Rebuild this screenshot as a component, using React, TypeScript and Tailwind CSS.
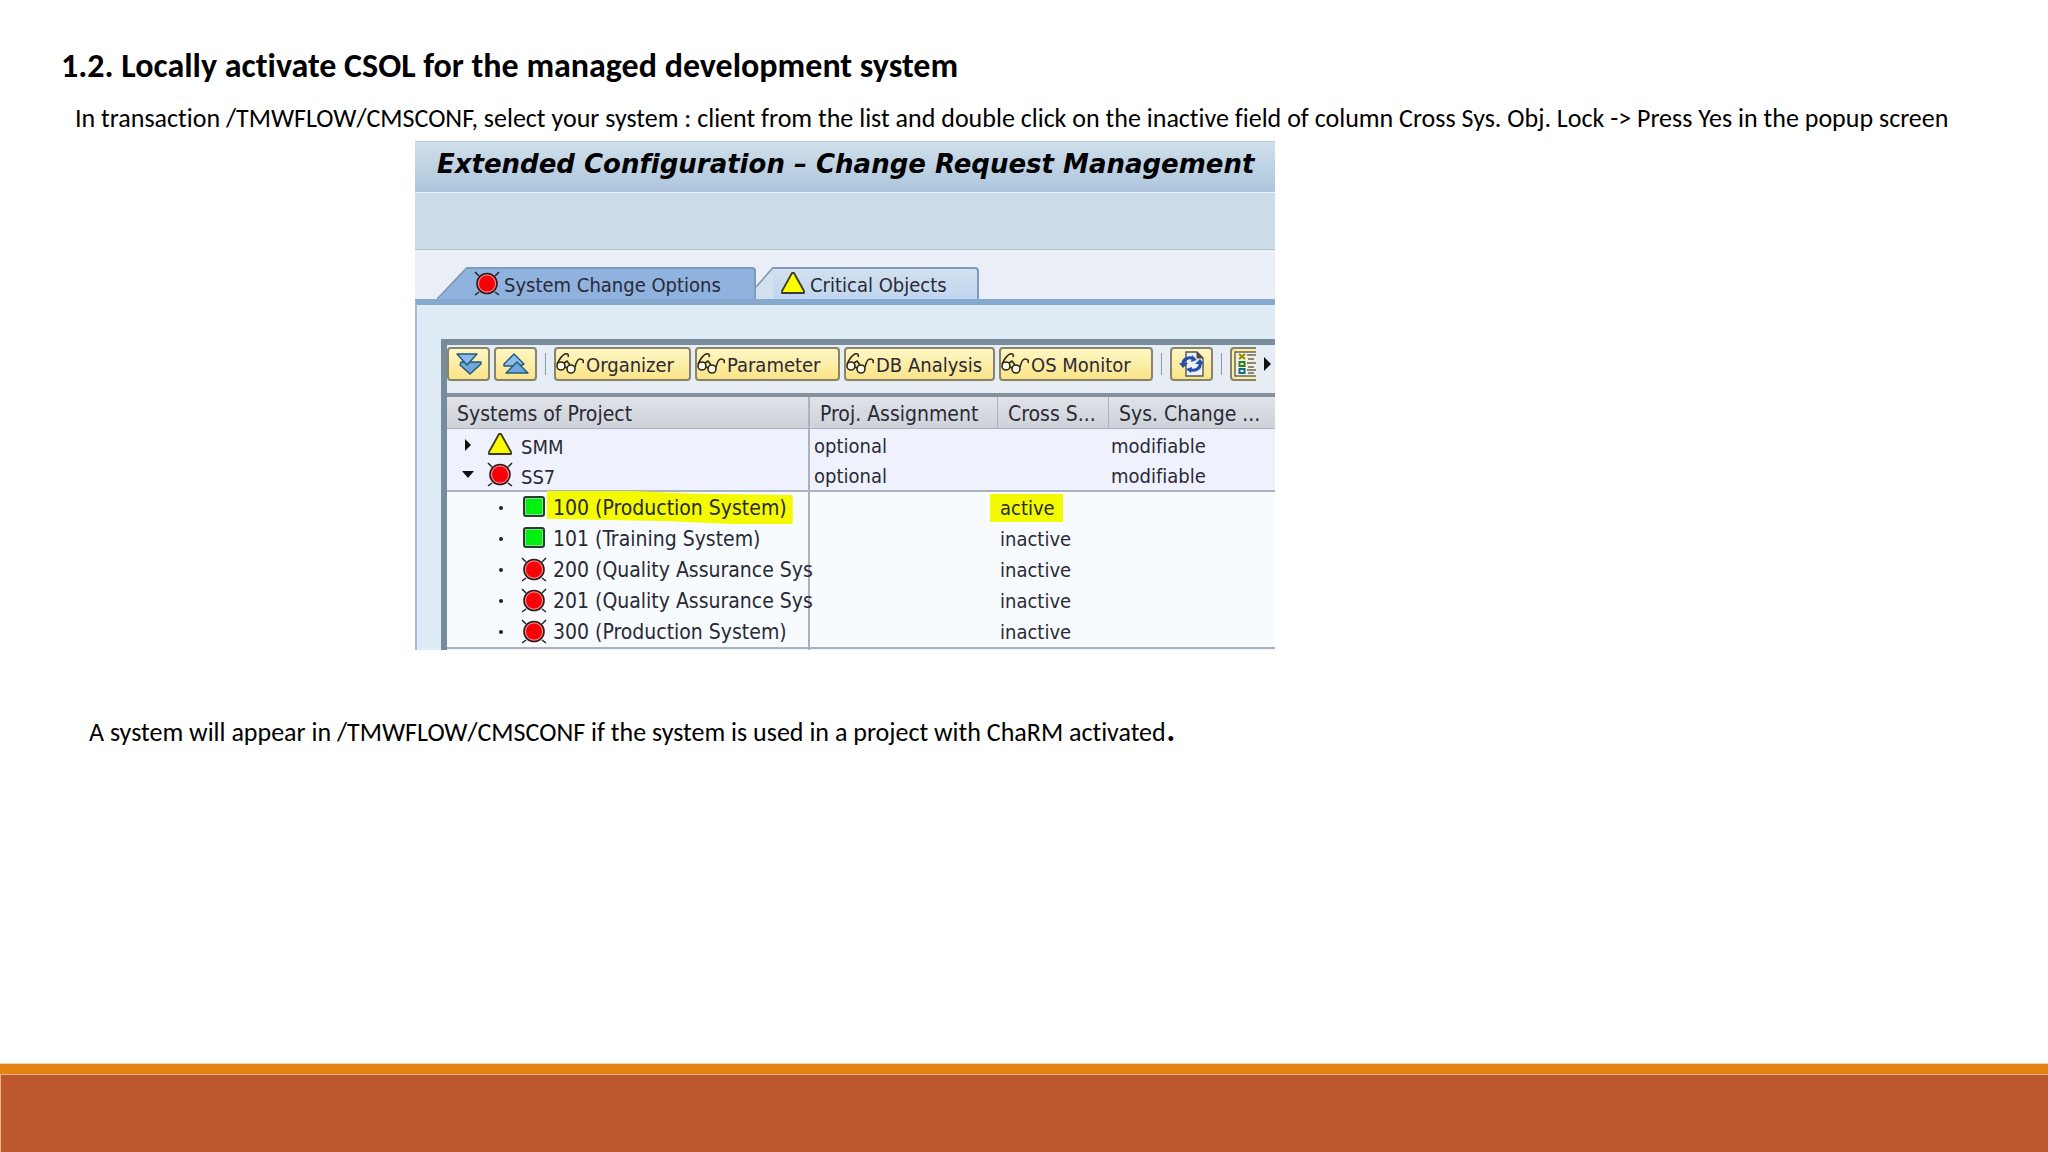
import { useState } from 'react';
import type { ReactNode } from 'react';

type Status = 'green' | 'yellow' | 'red';

const tabs: { name: string; status: Status }[] = [
  { name: 'System Change Options', status: 'red' },
  { name: 'Critical Objects', status: 'yellow' },
];

const tools = [
  { name: 'Organizer', width: 'w-[137px]' },
  { name: 'Parameter', width: 'w-[145px]' },
  { name: 'DB Analysis', width: 'w-[151px]' },
  { name: 'OS Monitor', width: 'w-[154px]' },
];

const systems = [
  { name: 'SMM', status: 'yellow' as Status, open: false },
  { name: 'SS7', status: 'red' as Status, open: true },
];

const clients = [
  { name: '100 (Production System)', status: 'green' as Status, lock: 'active' },
  { name: '101 (Training System)', status: 'green' as Status, lock: 'inactive' },
  { name: '200 (Quality Assurance Sys', status: 'red' as Status, lock: 'inactive' },
  { name: '201 (Quality Assurance Sys', status: 'red' as Status, lock: 'inactive' },
  { name: '300 (Production System)', status: 'red' as Status, lock: 'inactive' },
];

const StatusIcon = ({ status }: { status: Status }) => (
  <svg viewBox="0 0 26 26" className="h-[26px] w-[26px] shrink-0" aria-hidden="true">
    {status === 'red' && (
      <>
        <path d="M1 1l4 4M25 1l-4 4M1 24l4-3M25 24l-4-3" stroke="#222" strokeWidth="1.5" />
        <circle cx="13" cy="12.500" r="10" fill="#e88" stroke="#3a1518" strokeWidth="1.6" />
        <circle cx="13" cy="12.500" r="8" fill="#f80008" />
      </>
    )}
    {status === 'yellow' && (
      <path d="M12 2h2l10 18v2H2v-2z" fill="#fdfb00" stroke="#3c3a28" strokeWidth="1.8" strokeLinejoin="round" />
    )}
    {status === 'green' && (
      <>
        <rect x="3" y="2" width="20" height="19" rx="2" fill="#8d8" stroke="#23402a" strokeWidth="2" />
        <rect x="5" y="4" width="16" height="15" fill="#00f010" />
      </>
    )}
  </svg>
);

const Glasses = () => (
  <svg viewBox="0 0 28 24" className="h-6 w-7 shrink-0" fill="none" stroke="#2e2810" strokeWidth="1.6" aria-hidden="true">
    <path d="M1 12C3 8 6 3 9 2c3-1 4 1 3 3" />
    <path d="M19 15c1-4 2-8 5-8 3 0 4 2 3 4" />
    <circle cx="5" cy="14" r="4" fill="#fffdf0" />
    <circle cx="15" cy="17" r="4" fill="#fffdf0" />
    <path d="M8 11l3-2 3 4M9 15l2 1" />
  </svg>
);

const Chevrons = ({ up = false }: { up?: boolean }) => (
  <svg viewBox="0 0 26 22" className="h-[22px] w-[26px]" aria-hidden="true">
    <g stroke="#1f5a78" strokeWidth="1.4" strokeLinejoin="round">
      {up ? (
        <>
          <path d="M1 11L11 1l10 10-4 2H1z" fill="#8cbce8" />
          <path d="M3 20L14 9l11 11z" fill="#6fa8e0" />
        </>
      ) : (
        <>
          <path d="M5 9h20v2L14 21 4 12z" fill="#6fa8d8" />
          <path d="M1 1h20L11 12z" fill="#8cb8ec" />
        </>
      )}
    </g>
  </svg>
);

const Refresh = () => (
  <svg viewBox="0 0 26 26" className="h-[26px] w-[26px]" aria-hidden="true">
    <path d="M7 1h11l6 6v18H7z" fill="#eef0fa" stroke="#555" strokeWidth="1.4" />
    <path d="M18 1v6h6z" fill="#5b4a48" stroke="#444" />
    <path d="M4 13c0-5 6-8 11-5M21 12c1 6-6 9-11 6" fill="none" stroke="#2450a8" strokeWidth="3.2" />
    <path d="M0 12h9l-5 5zM16 13h9l-4-5z" fill="#2450a8" />
    <path d="M13 4l5 5-6 2zM12 22l-5-4 6-2z" fill="#2450a8" />
  </svg>
);

const Legend = () => (
  <svg viewBox="0 0 22 26" className="h-[26px] w-[22px]" aria-hidden="true">
    <path d="M22 1H1v24h21" fill="#f3f1dd" stroke="#6b675a" strokeWidth="1.5" />
    <path d="M5 3l6 5M11 3L5 8" stroke="#8c8a00" strokeWidth="2" />
    <rect x="5.500" y="11" width="5" height="4" fill="none" stroke="#2c8030" strokeWidth="2" />
    <rect x="5.500" y="18" width="5" height="4" fill="none" stroke="#1b6a90" strokeWidth="2" />
    <path d="M13 4h9M14 8h6M13 12h9M14 16h6M13 19h9M14 22h6" stroke="#666" strokeWidth="1.4" />
  </svg>
);

const ToolButton = ({ label, className, children }: { label?: string; className: string; children: ReactNode }) => (
  <button
    type="button"
    aria-label={label}
    className={`flex h-[34px] shrink-0 items-center rounded border-2 border-[#88846c] bg-linear-to-b from-[#fdf7c4] to-[#fbe488] ${className}`}
  >
    {children}
  </button>
);

const Divider = () => <span className="h-[22px] w-px shrink-0 bg-[#8b98a4]" />;

const ConfigWindow = () => {
  const [activeTab, setActiveTab] = useState('System Change Options');

  return (
    <section className="w-full max-w-[860px] overflow-hidden bg-[#dfecf5] font-['DejaVu_Sans_Condensed','DejaVu_Sans',sans-serif] text-xl text-[#2a2a35]">
      <h2 className="h-[51px] overflow-hidden border-t border-[#b9cbd9] bg-linear-to-b from-[#d0dfea] to-[#adc5dc] pl-[22px] font-['DejaVu_Sans',sans-serif] text-[26px] leading-[44px] font-bold whitespace-nowrap text-black italic">
        Extended Configuration – Change Request Management
      </h2>
      <div className="h-[58px] border-t border-b border-t-[#eaf3f9] border-b-[#b0bec8] bg-[#cddce6]" />

      {/* Tab strip */}
      <div role="tablist" className="flex h-[49px] items-end bg-[#e9eef7] pl-[22px]">
        {tabs.map((tab, index) => (
          <button
            key={tab.name}
            type="button"
            role="tab"
            aria-selected={activeTab === tab.name}
            onClick={() => setActiveTab(tab.name)}
            className="flex h-8 items-stretch"
          >
            <svg
              viewBox={index === 0 ? '0 0 30 32' : '0 0 17 32'}
              className={index === 0 ? 'h-8 w-[30px]' : 'h-8 w-[17px]'}
              aria-hidden="true"
            >
              <path
                d={index === 0 ? 'M0 32L30 0.500V32z' : 'M0 32V20L17 0.500V32z'}
                fill={activeTab === tab.name ? '#8fb2de' : '#d3e0ee'}
              />
              <path d={index === 0 ? 'M0 32L30 0.500' : 'M0 20L17 0.500'} stroke="#7c93ad" strokeWidth="1.5" fill="none" />
            </svg>
            <span
              className={`flex items-center gap-1 rounded-tr border-t-2 border-r-2 border-[#7f9bbb] pl-[7px] whitespace-nowrap ${
                index === 0 ? 'w-[289px]' : 'w-[206px]'
              } ${activeTab === tab.name ? 'bg-[#8fb2de]' : 'bg-linear-to-b from-[#d3e0ee] to-[#bfd6f0]'}`}
            >
              <StatusIcon status={tab.status} />
              <span className="pt-0.5">{tab.name}</span>
            </span>
          </button>
        ))}
      </div>

      <div className="border-t-[6px] border-l-2 border-t-[#85a9cf] border-l-[#a3bbdc] pt-[34px] pl-6">
        <div className="border-t-[6px] border-l-[6px] border-[#788c9c]">
          {/* Toolbar */}
          <div className="flex h-12 items-start bg-[#e6edf4] pt-0.5">
            <div className="flex gap-1">
              <ToolButton label="Expand all" className="w-[43px] justify-center">
                <Chevrons />
              </ToolButton>
              <ToolButton label="Collapse all" className="w-[43px] justify-center">
                <Chevrons up />
              </ToolButton>
            </div>
            <div className="flex h-[34px] items-center px-2">
              <Divider />
            </div>
            <div className="flex gap-1">
              {tools.map((tool) => (
                <ToolButton key={tool.name} className={`whitespace-nowrap ${tool.width}`}>
                  <Glasses />
                  <span className="pt-0.5 pl-0.5">{tool.name}</span>
                </ToolButton>
              ))}
            </div>
            <div className="flex h-[34px] flex-1 items-center justify-between pr-1 pl-2">
              <Divider />
              <ToolButton label="Refresh" className="w-[43px] justify-center">
                <Refresh />
              </ToolButton>
              <Divider />
              <button
                type="button"
                aria-label="Legend"
                className="flex h-[34px] w-[26px] items-center rounded-l border-2 border-r-0 border-[#88846c] bg-[#fbeda6] pl-0.5"
              >
                <Legend />
              </button>
              <svg viewBox="0 0 7 14" className="h-3.5 w-[7px]" aria-hidden="true">
                <path d="M0 0l7 7-7 7z" fill="#111" />
              </svg>
            </div>
          </div>

          <table className="w-full table-fixed border-separate border-spacing-0 border-t-4 border-[#84919d] text-left">
            <colgroup>
              <col className="w-[363px]" />
              <col className="w-[188px]" />
              <col className="w-[111px]" />
              <col />
            </colgroup>
            <thead>
              <tr className="h-8 bg-linear-to-b from-[#e0e3e8] to-[#cdd1d8] text-[21px] leading-7 whitespace-nowrap">
                <th className="border-r-2 border-b border-[#a9b2be] p-0 pt-0.5 pl-2.5 font-normal">Systems of Project</th>
                <th className="border-r border-b border-[#a9b2be] p-0 pt-0.5 pl-2.5 font-normal">Proj. Assignment</th>
                <th className="border-r border-b border-[#a9b2be] p-0 pt-0.5 pl-2.5 font-normal">Cross S...</th>
                <th className="border-b border-[#a9b2be] p-0 pt-0.5 pl-2.5 font-normal">Sys. Change ...</th>
              </tr>
            </thead>
            <tbody>
              {systems.map((system) => (
                <tr key={system.name} className="h-[31px] bg-[#eff2fd]">
                  <td className={`border-r-2 border-[#a9b2be] p-0 ${system.open ? 'border-b-2' : ''}`}>
                    <div className="flex h-[29px] items-center pl-3.5">
                      <svg viewBox="0 0 14 14" className="h-3.5 w-3.5" aria-hidden="true">
                        <path d={system.open ? 'M1 3h12L7 10z' : 'M4 1l6 6-6 6z'} fill="#111" />
                      </svg>
                      <span className="flex items-center gap-2 pl-3">
                        <StatusIcon status={system.status} />
                        <span className="pt-1">{system.name}</span>
                      </span>
                    </div>
                  </td>
                  <td className={`border-[#a9b2be] p-0 pt-0.5 pl-1 ${system.open ? 'border-b-2' : ''}`}>optional</td>
                  <td className={`border-[#a9b2be] p-0 ${system.open ? 'border-b-2' : ''}`} />
                  <td className={`border-[#a9b2be] p-0 pt-0.5 pl-0.5 ${system.open ? 'border-b-2' : ''}`}>modifiable</td>
                </tr>
              ))}
              {clients.map((client) => (
                <tr key={client.name} className="h-[31px] bg-[#f7fbff] whitespace-nowrap">
                  <td className="border-r-2 border-[#a9b2be] p-0">
                    <div className="flex h-[29px] items-center pl-[52px]">
                      <span className="h-1 w-1 shrink-0 rounded-full bg-[#222]" />
                      <span className="flex items-center pl-[18px] text-[21px]">
                        <StatusIcon status={client.status} />
                        {client.lock === 'active' ? (
                          <mark className="bg-[#f4fb00] px-1.5 pt-0.5 leading-[31px] text-inherit [clip-path:polygon(0_0,35%_0,60%_8%,100%_12%,100%_100%,75%_100%,50%_92%,0_84%)]">
                            {client.name}
                          </mark>
                        ) : (
                          <span className="pt-0.5 pl-1.5">{client.name}</span>
                        )}
                      </span>
                    </div>
                  </td>
                  <td className="p-0" />
                  <td className="p-0 pl-0.5">
                    {client.lock === 'active' ? (
                      <mark className="-ml-2.5 inline-block bg-[#f4fb00] pr-2 pl-2.5 leading-7 text-inherit">{client.lock}</mark>
                    ) : (
                      client.lock
                    )}
                  </td>
                  <td className="p-0" />
                </tr>
              ))}
            </tbody>
            <tfoot>
              <tr>
                <td className="h-[3px] border-t-2 border-r-2 border-[#a9b2be] bg-[#eff2fd] p-0" />
                <td colSpan={3} className="h-[3px] border-t-2 border-[#a9b2be] bg-[#eff2fd] p-0" />
              </tr>
            </tfoot>
          </table>
        </div>
      </div>
    </section>
  );
};

const App = () => {
  return (
    <div className="flex min-h-screen flex-col bg-white font-['Carlito','Lato',sans-serif] text-black [font-variant-ligatures:none]">
      <main className="flex-1 pt-12">
        <h1 className="pl-[61px] text-[34px] leading-9 font-bold">1.2. Locally activate CSOL for the managed development system</h1>
        <p className="pt-5 pl-[75px] text-[26px] leading-7">
          In transaction /TMWFLOW/CMSCONF, select your system : client from the list and double click on the inactive field of column
          Cross Sys. Obj. Lock -&gt; Press Yes in the popup screen
        </p>
        <div className="pt-[9px] pl-[415px]">
          <ConfigWindow />
        </div>
        <p className="pt-[58px] pl-[89px] text-[26px] leading-10">
          A system will appear in /TMWFLOW/CMSCONF if the system is used in a project with ChaRM activated
          <span className="text-[40px]">.</span>
        </p>
      </main>
      <footer className="h-[89px] border-t border-[#f5d3a4] bg-[#e48312]">
        <div className="mt-2.5 h-[78px] border-t border-l border-[#efb08c] bg-[#bd582c]" />
      </footer>
    </div>
  );
};

export default App;
